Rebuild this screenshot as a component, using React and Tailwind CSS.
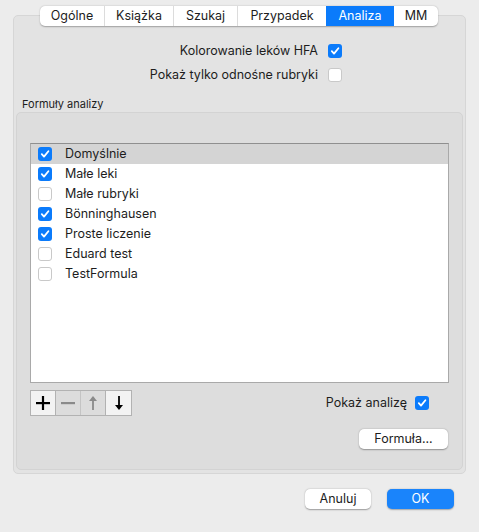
import { useState } from 'react'

const font = { fontFamily: 'Inter, "Noto Sans", sans-serif' }

function Check({ checked }) {
  if (checked) {
    return (
      <span className="flex h-[14px] w-[14px] shrink-0 items-center justify-center rounded-[3px] bg-[#0b7bfb]">
        <svg width="10" height="10" viewBox="0 0 10 10">
          <path d="M1.8 5.2 L4 7.6 L8.4 2.2" fill="none" stroke="white" strokeWidth="1.8" strokeLinecap="round" strokeLinejoin="round" />
        </svg>
      </span>
    )
  }
  return <span className="block h-[14px] w-[14px] shrink-0 rounded-[3px] border border-[#c9c9c9] bg-white" />
}

const tabs = ['Ogólne', 'Książka', 'Szukaj', 'Przypadek', 'Analiza', 'MM']
const tabWidths = ['w-[64px]', 'w-[69px]', 'w-[64px]', 'w-[89px]', 'w-[68px]', 'w-[44px]']

const formulas = [
  { name: 'Domyślnie', on: true },
  { name: 'Małe leki', on: true },
  { name: 'Małe rubryki', on: false },
  { name: 'Bönninghausen', on: true },
  { name: 'Proste liczenie', on: true },
  { name: 'Eduard test', on: false },
  { name: 'TestFormula', on: false },
]

function Arrow({ up, color }) {
  return (
    <svg width="12" height="16" viewBox="0 0 12 16">
      {up ? (
        <>
          <path d="M6 1 L10 6 L2 6 Z" fill={color} />
          <rect x="5.1" y="5" width="1.8" height="10" fill={color} />
        </>
      ) : (
        <>
          <path d="M6 15 L10 10 L2 10 Z" fill={color} />
          <rect x="5.1" y="1" width="1.8" height="10" fill={color} />
        </>
      )}
    </svg>
  )
}

export default function App() {
  const [selected] = useState(0)

  return (
    <div className="h-[532px] w-[479px] overflow-hidden bg-[#ececec] pl-[13px] pt-[15px] text-[12.5px] leading-[16px] text-[#1d1d1d]" style={font}>
      <div className="relative flex h-[459px] w-[453px] flex-col rounded-[5px] border border-[#d6d6d6] bg-[#e3e3e3]">
        <div className="absolute left-[26px] top-[-10px] flex h-[20px] overflow-hidden rounded-[5px] bg-white shadow-[0_0.5px_1.5px_rgba(0,0,0,0.3)]">
          {tabs.map((t, i) => (
            <div
              key={t}
              className={`flex items-center justify-center leading-none ${tabWidths[i]} ${
                t === 'Analiza' ? 'bg-[#0b7bfb] text-white' : 'text-[#1d1d1d]'
              } ${i > 0 && t !== 'Analiza' && tabs[i - 1] !== 'Analiza' ? 'border-l border-[#dcdcdc]' : ''}`}
            >
              {t}
            </div>
          ))}
        </div>

        <div className="flex flex-col gap-[8px] pr-[123px] pt-[27px]">
          <div className="flex items-center justify-end gap-[10px]">
            <span>Kolorowanie leków HFA</span>
            <Check checked />
          </div>
          <div className="flex items-center justify-end gap-[10px]">
            <span>Pokaż tylko odnośne rubryki</span>
            <Check checked={false} />
          </div>
        </div>

        <div className="ml-[8px] mt-[15px] text-[11px] leading-[13px]">Formuły analizy</div>

        <div className="mx-[2px] mt-[1px] flex h-[358px] flex-col rounded-[5px] border border-[#d3d3d3] bg-[#dddddd] px-[13px] pt-[30px]">
          <div className="h-[240px] border border-[#a9a9a9] border-t-[#8f8f8f] bg-white">
            {formulas.map((f, i) => (
              <div
                key={f.name}
                className={`flex h-[20px] items-center gap-[13px] pl-[7px] ${i === selected ? 'bg-[#d4d4d4]' : ''}`}
              >
                <Check checked={f.on} />
                <span>{f.name}</span>
              </div>
            ))}
          </div>

          <div className="mt-[7px] flex items-start justify-between">
            <div className="flex h-[26px] border border-[#b2b2b2]">
              <div className="flex w-[25px] items-center justify-center border-r border-[#b2b2b2] bg-[#f3f3f3]">
                <svg width="14" height="14" viewBox="0 0 14 14">
                  <rect x="0" y="6" width="14" height="2.2" fill="#000" />
                  <rect x="5.9" y="0" width="2.2" height="14" fill="#000" />
                </svg>
              </div>
              <div className="flex w-[25px] items-center justify-center border-r border-[#c4c4c4] bg-[#dcdcdc]">
                <svg width="14" height="14" viewBox="0 0 14 14">
                  <rect x="0" y="6" width="14" height="2.2" fill="#8a8a8a" />
                </svg>
              </div>
              <div className="flex w-[25px] items-center justify-center border-r border-[#b2b2b2] bg-[#dcdcdc]">
                <Arrow up color="#8a8a8a" />
              </div>
              <div className="flex w-[25px] items-center justify-center bg-[#f3f3f3]">
                <Arrow color="#000" />
              </div>
            </div>

            <div className="flex flex-col items-end pr-[1px]">
              <div className="mr-[19px] mt-[5px] flex items-center gap-[8px]">
                <span>Pokaż analizę</span>
                <Check checked />
              </div>
              <button className="mt-[18px] flex h-[20px] w-[89px] items-center justify-center rounded-[5px] bg-white leading-none shadow-[0_0.5px_1.5px_rgba(0,0,0,0.35)]">
                Formuła...
              </button>
            </div>
          </div>
        </div>
      </div>

      <div className="mt-[15px] flex justify-end gap-[16px] pr-[25px]">
        <button className="flex h-[20px] w-[66px] items-center justify-center rounded-[5px] bg-white leading-none shadow-[0_0.5px_1.5px_rgba(0,0,0,0.35)]">
          Anuluj
        </button>
        <button className="flex h-[20px] w-[67px] items-center justify-center rounded-[5px] bg-[#1a84fb] leading-none text-white shadow-[0_0.5px_1.5px_rgba(0,0,0,0.3)]">
          OK
        </button>
      </div>
    </div>
  )
}
